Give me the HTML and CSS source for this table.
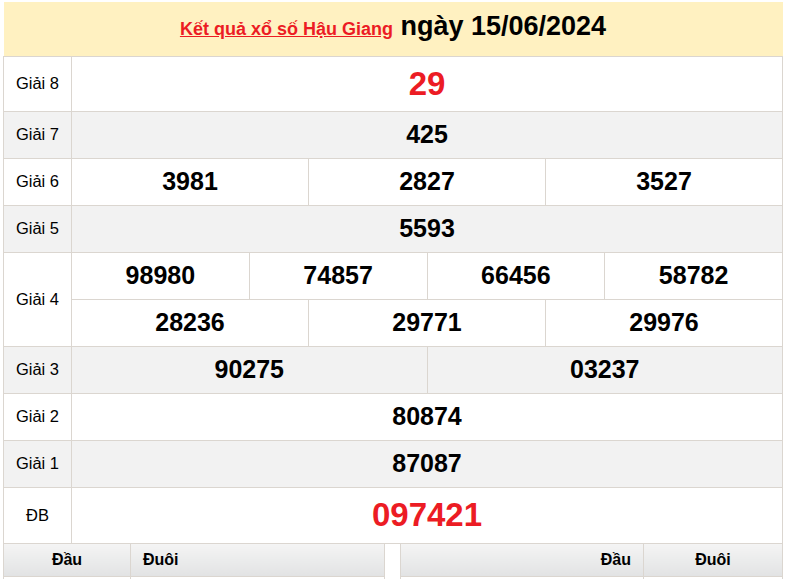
FILE: index.html
```html
<!DOCTYPE html>
<html lang="vi">
<head>
<meta charset="utf-8">
<title>Kết quả xổ số Hậu Giang</title>
<link rel="stylesheet" href="styles.css">
</head>
<body>
<div class="page">
  <table class="kq">
    <colgroup>
      <col class="c-label">
      <col span="12">
    </colgroup>
    <thead>
      <tr>
        <th colspan="13" class="title"><a href="#" class="title-link">Kết quả xổ số Hậu Giang</a><span class="title-date"> ngày 15/06/2024</span></th>
      </tr>
    </thead>
    <tbody>
      <tr class="r-big">
        <td class="lbl">Giải 8</td>
        <td colspan="12" class="num red">29</td>
      </tr>
      <tr class="r-alt">
        <td class="lbl">Giải 7</td>
        <td colspan="12" class="num">425</td>
      </tr>
      <tr>
        <td class="lbl">Giải 6</td>
        <td colspan="4" class="num">3981</td>
        <td colspan="4" class="num">2827</td>
        <td colspan="4" class="num">3527</td>
      </tr>
      <tr class="r-alt">
        <td class="lbl">Giải 5</td>
        <td colspan="12" class="num">5593</td>
      </tr>
      <tr>
        <td class="lbl" rowspan="2">Giải 4</td>
        <td colspan="3" class="num">98980</td>
        <td colspan="3" class="num">74857</td>
        <td colspan="3" class="num">66456</td>
        <td colspan="3" class="num">58782</td>
      </tr>
      <tr>
        <td colspan="4" class="num">28236</td>
        <td colspan="4" class="num">29771</td>
        <td colspan="4" class="num">29976</td>
      </tr>
      <tr class="r-alt">
        <td class="lbl">Giải 3</td>
        <td colspan="6" class="num">90275</td>
        <td colspan="6" class="num">03237</td>
      </tr>
      <tr>
        <td class="lbl">Giải 2</td>
        <td colspan="12" class="num">80874</td>
      </tr>
      <tr class="r-alt">
        <td class="lbl">Giải 1</td>
        <td colspan="12" class="num">87087</td>
      </tr>
      <tr class="r-db">
        <td class="lbl">ĐB</td>
        <td colspan="12" class="num red">097421</td>
      </tr>
    </tbody>
  </table>

  <div class="loto">
    <table class="lt lt-left">
      <colgroup><col class="lc-1"><col></colgroup>
      <thead>
        <tr><th class="h-center">Đầu</th><th class="h-left">Đuôi</th></tr>
      </thead>
      <tbody>
        <tr><td></td><td></td></tr>
      </tbody>
    </table>
    <table class="lt lt-right">
      <colgroup><col><col class="rc-2"></colgroup>
      <thead>
        <tr><th class="h-right">Đầu</th><th class="h-center">Đuôi</th></tr>
      </thead>
      <tbody>
        <tr><td></td><td></td></tr>
      </tbody>
    </table>
  </div>
</div>
</body>
</html>
```
FILE: styles.css
```css
html, body {
  margin: 0;
  padding: 0;
  background: #ffffff;
}

body {
  font-family: "Liberation Sans", Arial, sans-serif;
  color: #000;
}

.page {
  padding: 2px 0 0 3px;
  width: 780px;
}

.kq {
  width: 780px;
  border-collapse: collapse;
  table-layout: fixed;
}

.c-label {
  width: 68px;
}

.title {
  background: #fff1c1;
  height: 54px;
  padding: 0 0 4px;
  text-align: center;
  font-weight: bold;
  white-space: nowrap;
  border: none;
  box-sizing: border-box;
}

.title-link {
  color: #ec1c24;
  font-size: 18px;
  text-decoration: underline;
}

.title-date {
  font-size: 27px;
  color: #000;
}

.kq td {
  border: 1px solid #dbd6d0;
  padding: 0;
  height: 46px;
  text-align: center;
  vertical-align: middle;
}

.kq tr.r-alt td {
  background: #f2f2f2;
}

.kq tr.r-big td {
  height: 54px;
}

.kq tr.r-db td {
  height: 55px;
}

.lbl {
  font-size: 16.5px;
}

.num {
  font-size: 25px;
  font-weight: bold;
}

.num.red {
  color: #ec1c24;
  font-size: 33px;
}

.loto {
  display: flex;
  gap: 15px;
}

.lt {
  border-collapse: collapse;
  table-layout: fixed;
}

.lt-left {
  width: 382px;
}

.lt-right {
  width: 383px;
}

.lc-1 {
  width: 127px;
}

.rc-2 {
  width: 139px;
}

.lt th {
  height: 33px;
  padding: 0 12px;
  font-size: 16px;
  font-weight: bold;
  background: linear-gradient(#f4f4f4, #e2e3e4);
  border: 1px solid #dbd6d0;
  border-top: none;
  box-sizing: border-box;
}

.lt td {
  height: 24px;
  border: 1px solid #dbd6d0;
}

.h-center {
  text-align: center;
}

.h-left {
  text-align: left;
}

.h-right {
  text-align: right;
}
```
